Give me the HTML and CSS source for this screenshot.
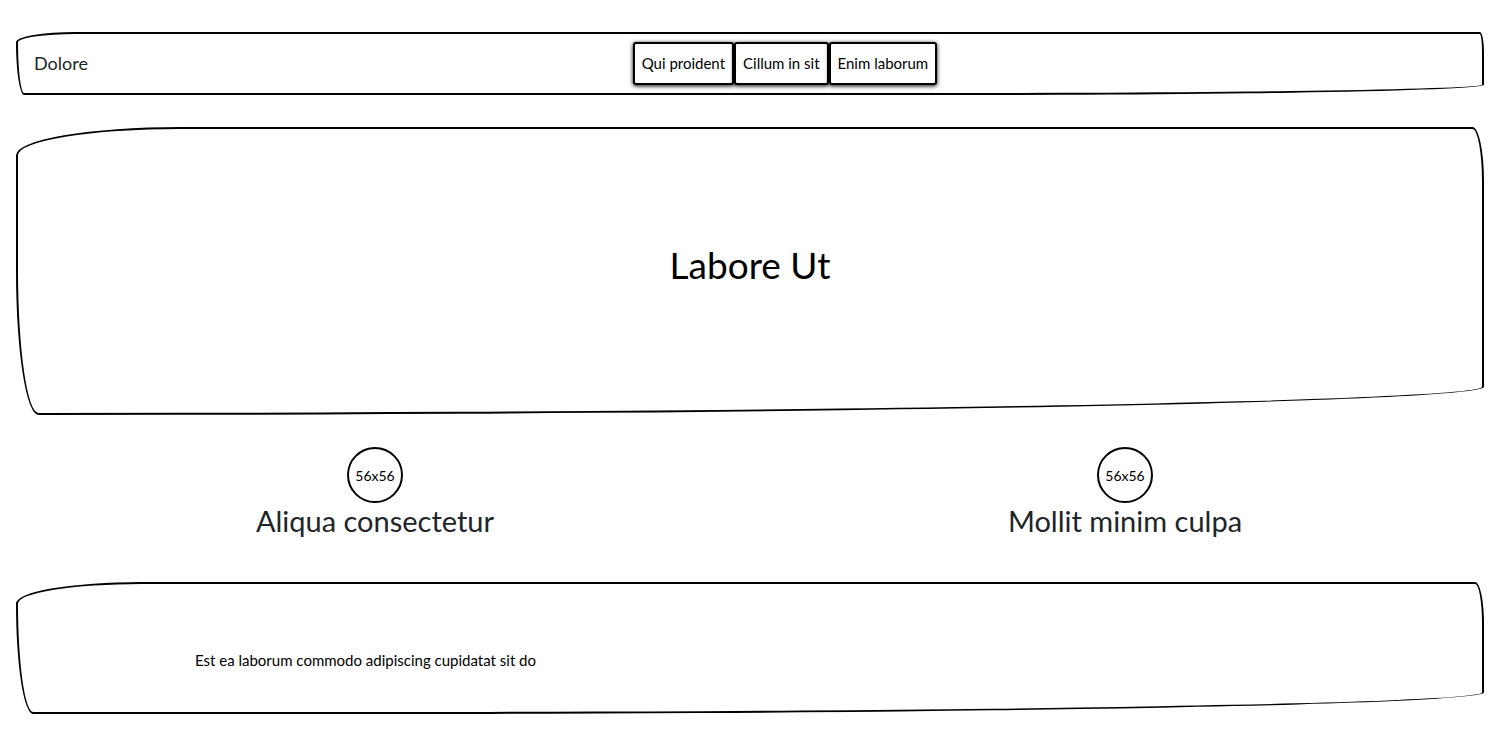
FILE: index.html
```html
<!DOCTYPE html>
<html lang="la">
<head>
<meta charset="utf-8">
<meta name="viewport" content="width=device-width, initial-scale=1">
<title>Dolore</title>
<link rel="stylesheet" href="styles.css">
</head>
<body>
<header class="navbar sketch">
  <a class="brand" href="#">Dolore</a>
  <nav class="nav-group">
    <button class="nav-button" type="button">Qui proident</button>
    <button class="nav-button" type="button">Cillum in sit</button>
    <button class="nav-button" type="button">Enim laborum</button>
  </nav>
</header>
<main>
  <section class="hero sketch">
    <h1 class="hero-title">Labore Ut</h1>
  </section>
  <section class="features">
    <article class="feature">
      <div class="avatar">56x56</div>
      <h2 class="feature-title">Aliqua consectetur</h2>
    </article>
    <article class="feature">
      <div class="avatar">56x56</div>
      <h2 class="feature-title">Mollit minim culpa</h2>
    </article>
  </section>
</main>
<footer class="footer sketch">
  <p class="footer-text">Est ea laborum commodo adipiscing cupidatat sit do</p>
</footer>
</body>
</html>
```
FILE: styles.css
```css
* {
  box-sizing: border-box;
}

body {
  margin: 0;
  padding: 32px 0;
  background: #fff;
  color: #000;
  font-family: Lato, "Liberation Sans", sans-serif;
  font-size: 15px;
  line-height: 23px;
}

.sketch {
  margin: 0 16px;
  border: 2px solid #000;
  border-radius: 255px 18px 2250px 35px / 44px 85px 44px 225px;
}

.navbar {
  display: flex;
  align-items: center;
  padding: 8px 16px;
}

.brand {
  margin-right: 16px;
  color: #212529;
  font-size: 18px;
  text-decoration: none;
}

.nav-group {
  display: flex;
  margin: 0 auto;
}

.nav-button {
  padding: 8px 7px;
  border: 2px solid #000;
  border-radius: 3px;
  background: #fff;
  box-shadow: 0 1px 4px #000;
  color: #000;
  font: inherit;
}

.hero {
  display: flex;
  align-items: center;
  justify-content: center;
  margin-top: 32px;
  padding: 112px 32px 124px;
}

.hero-title {
  margin: 0;
  font-size: 37px;
  font-weight: 400;
  line-height: 48px;
}

.features {
  display: grid;
  grid-template-columns: 1fr 1fr;
  margin: 32px 0;
}

.feature {
  display: flex;
  flex-direction: column;
  align-items: center;
}

.avatar {
  display: flex;
  align-items: center;
  justify-content: center;
  width: 56px;
  height: 56px;
  border: 2px solid #000;
  border-radius: 50%;
  font-size: 14px;
}

.feature-title {
  margin: 0 0 12px;
  color: #212529;
  font-size: 29px;
  font-weight: 400;
  line-height: 35px;
}

.footer {
  padding: 64px 177px 40px;
}

.footer-text {
  margin: 0;
  line-height: 24px;
}
```
